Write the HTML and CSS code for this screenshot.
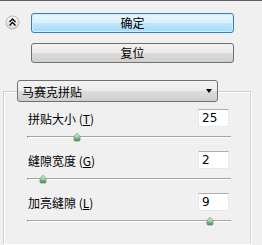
FILE: index.html
```html
<!DOCTYPE html>
<html lang="zh">
<head>
  <meta charset="UTF-8">
  <title>马赛克拼贴</title>
  <link rel="stylesheet" href="styles.css">
</head>
<body>
  <div class="top">
    <span class="collapse">
      <svg width="15" height="15" viewBox="0 0 15 15">
        <defs>
          <linearGradient id="cg" x1="0" y1="0" x2="0" y2="1">
            <stop offset="0" stop-color="#ffffff"/>
            <stop offset="1" stop-color="#d8d8d8"/>
          </linearGradient>
        </defs>
        <circle cx="7.5" cy="7.5" r="6.5" fill="url(#cg)" stroke="#b4b4b4"/>
        <polyline points="4.5,7 7.5,4 10.5,7" fill="none" stroke="#000" stroke-width="1.3"/>
        <polyline points="4.5,10.5 7.5,7.5 10.5,10.5" fill="none" stroke="#000" stroke-width="1.3"/>
      </svg>
    </span>
    <div class="buttons">
      <button class="btn btn-ok">确定</button>
      <button class="btn">复位</button>
    </div>
  </div>

  <fieldset class="group">
    <legend>
      <div class="select">
        <span>马赛克拼贴</span>
        <span class="arrow"></span>
      </div>
    </legend>

    <div class="rows">
      <div class="row">
        <div class="row-head">
          <label>拼贴大小 (<u>T</u>)</label>
          <input class="num" type="text" value="25">
        </div>
        <div class="slider">
          <div class="track"></div>
          <svg class="thumb" style="left: 24.5%" width="8" height="10" viewBox="0 0 8 10"><use href="#thumb"/></svg>
        </div>
      </div>

      <div class="row">
        <div class="row-head">
          <label>缝隙宽度 (<u>G</u>)</label>
          <input class="num" type="text" value="2">
        </div>
        <div class="slider">
          <div class="track"></div>
          <svg class="thumb" style="left: 7.8%" width="8" height="10" viewBox="0 0 8 10"><use href="#thumb"/></svg>
        </div>
      </div>

      <div class="row">
        <div class="row-head">
          <label>加亮缝隙 (<u>L</u>)</label>
          <input class="num" type="text" value="9">
        </div>
        <div class="slider">
          <div class="track"></div>
          <svg class="thumb" style="left: 89.7%" width="8" height="10" viewBox="0 0 8 10"><use href="#thumb"/></svg>
        </div>
      </div>
    </div>
  </fieldset>

  <svg width="0" height="0" class="defs">
    <defs>
      <linearGradient id="tg" x1="0" y1="0" x2="0" y2="1">
        <stop offset="0" stop-color="#eef4ee"/>
        <stop offset="0.45" stop-color="#a9cdb0"/>
        <stop offset="1" stop-color="#2f8f45"/>
      </linearGradient>
      <path id="thumb" d="M1 4.5 L4 1.2 L7 4.5 V8 Q7 9 6 9 H2 Q1 9 1 8 Z" fill="url(#tg)" stroke="#6f9678" stroke-width="0.8"/>
    </defs>
  </svg>
</body>
</html>
```

FILE: styles.css
```css
body {
  margin: 0;
  background: #f0f0f0;
  border-top: 1px solid #5e5e5e;
  font-family: "Noto Sans CJK SC", "DejaVu Sans", sans-serif;
  font-size: 12px;
  color: #000;
  height: 244px;
  overflow: hidden;
}
.top {
  display: flex;
  align-items: flex-start;
  padding-top: 12px;
}
.collapse {
  display: block;
  width: 15px;
  height: 15px;
  margin: 2px 0 0 5px;
}
.collapse svg {
  display: block;
}
.buttons {
  display: flex;
  flex-direction: column;
  gap: 10px;
  margin-left: 11px;
}
.btn {
  width: 203px;
  height: 20px;
  padding: 0;
  border: 1px solid #707070;
  border-radius: 3px;
  background: linear-gradient(#f2f2f2, #ebebeb 50%, #dddddd 50%, #cfcfcf);
  font-family: inherit;
  font-size: 12px;
  line-height: 16px;
  color: #000;
}
.btn-ok {
  border-color: #3c7fb1;
  background: linear-gradient(#eaf6fd, #d9f0fc 50%, #bee6fd 50%, #a7d9f5);
  box-shadow: inset 0 0 0 1px #c9f0ff;
}
.group {
  box-sizing: border-box;
  height: 164px;
  margin: 17px 11px 0 3px;
  padding: 0;
  border: 1px solid #d0d0d0;
  border-bottom: 0;
  box-shadow: inset 1px 1px 0 #fff, 1px 1px 0 #fff;
}
.group legend {
  padding: 0;
  margin-left: 13px;
}
.select {
  display: flex;
  align-items: center;
  justify-content: space-between;
  box-sizing: border-box;
  width: 201px;
  height: 22px;
  padding: 0 4px 0 4px;
  border: 1px solid #707070;
  border-radius: 3px;
  background: linear-gradient(#f2f2f2, #ebebeb 50%, #dddddd 50%, #cfcfcf);
}
.arrow {
  width: 0;
  height: 0;
  margin-right: 1px;
  border-left: 3.5px solid transparent;
  border-right: 3.5px solid transparent;
  border-top: 4px solid #000;
}
.rows {
  padding: 7px 19px 0 23px;
}
.row-head {
  display: flex;
  align-items: center;
  justify-content: space-between;
  height: 18px;
}
.row-head label {
  padding-left: 1px;
}
.row-head u {
  text-underline-offset: 1px;
}
.num {
  box-sizing: border-box;
  width: 31px;
  height: 18px;
  margin: 0 2px 0 0;
  padding: 0 3px;
  border: 1px solid #e3e9ef;
  border-top-color: #abadb3;
  background: #fff;
  font-family: "DejaVu Sans", sans-serif;
  font-size: 12px;
  color: #000;
}
.slider {
  position: relative;
  box-sizing: border-box;
  height: 24px;
  padding-top: 9px;
}
.track {
  height: 1px;
  background: #a5a5a5;
  border-bottom: 1px solid #fff;
  border-left: 1px solid #808080;
}
.thumb {
  position: absolute;
  top: 5px;
  margin-left: -4px;
  display: block;
}
.defs {
  position: absolute;
}
```
